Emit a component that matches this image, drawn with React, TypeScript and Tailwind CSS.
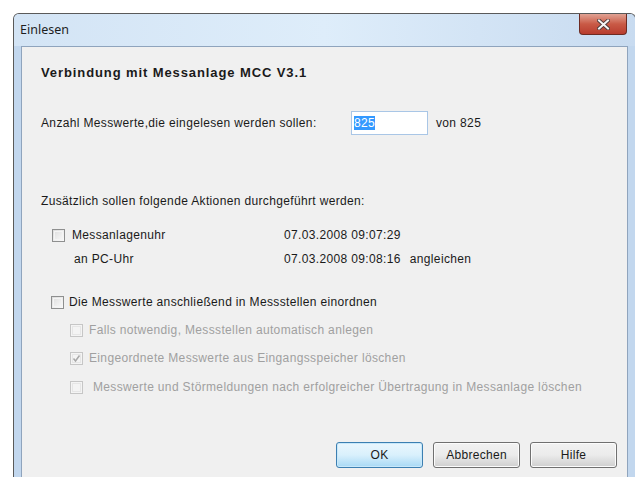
import React from "react";

const ui = { fontFamily: '"Liberation Sans", Arial, sans-serif' };
const titleFont = { fontFamily: '"Noto Sans", "Open Sans", sans-serif' };

function Check({ checked = false, disabled = false }: { checked?: boolean; disabled?: boolean }) {
  return (
    <span
      className={
        "relative inline-block w-[13px] h-[13px] shrink-0 border " +
        (disabled ? "border-[#c6c6c6] bg-[#f4f4f4]" : "border-[#8e8f8f] bg-gradient-to-br from-[#dcdcdc] to-[#fbfbfb]")
      }
    >
      <span
        className={
          "absolute inset-[1px] border " + (disabled ? "border-[#e6e6e6]" : "border-[#f4f4f4]")
        }
      />
      {checked && (
        <svg className="absolute left-[1px] top-[1px]" width="9" height="9" viewBox="0 0 9 9">
          <path d="M1.5 4.5 L3.5 7 L7.5 1.5" fill="none" stroke={disabled ? "#a8a8a8" : "#4a5f97"} strokeWidth="1.5" />
        </svg>
      )}
    </span>
  );
}

function Btn({ label, primary = false }: { label: string; primary?: boolean }) {
  return (
    <div
      className={
        "w-[87px] h-[26px] rounded-[3px] border flex items-center justify-center text-[12px] tracking-[0.3px] text-[#1a1a1a] " +
        (primary
          ? "border-[#3c7fb1] bg-gradient-to-b from-[#eaf6fd] via-[#d9f0fc] to-[#a7d9f5] shadow-[inset_0_0_0_1px_#c8e8fa]"
          : "border-[#707070] bg-gradient-to-b from-[#f2f2f2] via-[#ebebeb] to-[#cfcfcf] shadow-[inset_0_0_0_1px_#fcfcfc]")
      }
    >
      {label}
    </div>
  );
}

export default function App() {
  return (
    <div className="w-[635px] h-[477px] bg-white overflow-hidden" style={ui}>
      <div className="ml-[13px] mt-[13px] w-[623px] h-[470px] border border-[#5a5a5a] border-b-0 rounded-t-[6px] bg-[#c2d7ee] flex flex-col overflow-hidden">
        {/* title bar */}
        <div className="h-[32px] shrink-0 flex items-start justify-between bg-gradient-to-r from-[#d3e4f5] via-[#deedfa] to-[#c8dbf0]">
          <div className="pl-[6px] pt-[7px] text-[12.5px] text-[#1e1e1e]" style={titleFont}>
            Einlesen
          </div>
          <div className="mr-[8px] w-[48px] h-[21px] rounded-b-[4px] border border-t-0 border-[#6d2b22] bg-gradient-to-b from-[#e0a294] via-[#c95a46] to-[#b83c2e] flex items-center justify-center">
            <svg width="13" height="11" viewBox="0 0 13 11">
              <path d="M2 1.5 L11 9.5 M11 1.5 L2 9.5" stroke="#4a3a3a" strokeWidth="3.8" strokeLinecap="square" />
              <path d="M2 1.5 L11 9.5 M11 1.5 L2 9.5" stroke="#f4f4f4" strokeWidth="2" strokeLinecap="square" />
            </svg>
          </div>
        </div>
        {/* client area */}
        <div className="flex-1 mx-[7px] border border-b-0 border-[#8fa4bd] bg-[#f0f0f0] text-[12px] tracking-[0.35px] text-[#1a1a1a] flex flex-col">
          <div className="pl-[19px] mt-[18px] h-[16px] leading-[16px] font-bold text-[13px] tracking-[0.9px]">
            Verbindung mit Messanlage MCC V3.1
          </div>
          <div className="pl-[19px] mt-[30px] h-[24px] flex items-center">
            <span className="w-[310px]">Anzahl Messwerte,die eingelesen werden sollen:</span>
            <div className="w-[77px] h-[24px] border border-[#a9c6e6] bg-white flex items-center pl-[2px]">
              <span className="bg-[#3399ff] text-white leading-[14px]">825</span>
            </div>
            <span className="ml-[8px]">von 825</span>
          </div>
          <div className="pl-[19px] mt-[58px] h-[16px] leading-[16px]">
            Zusätzlich sollen folgende Aktionen durchgeführt werden:
          </div>
          <div className="mt-[18px] h-[16px] flex items-center">
            <div className="pl-[30px] w-[262px] flex items-center gap-[7px]">
              <Check />
              <span>Messanlagenuhr</span>
            </div>
            <span>07.03.2008 09:07:29</span>
          </div>
          <div className="mt-[8px] h-[16px] flex items-center">
            <div className="pl-[52px] w-[262px]">an PC-Uhr</div>
            <span>07.03.2008 09:08:16</span>
            <span className="ml-[9px]">angleichen</span>
          </div>
          <div className="mt-[27px] h-[16px] flex items-center pl-[29px] gap-[5px]">
            <Check />
            <span>Die Messwerte anschließend in Messstellen einordnen</span>
          </div>
          <div className="pl-[48px] flex flex-col text-[#a0a0a0]">
            <div className="mt-[12px] h-[16px] flex items-center gap-[6px]">
              <Check disabled />
              <span>Falls notwendig, Messstellen automatisch anlegen</span>
            </div>
            <div className="mt-[12px] h-[16px] flex items-center gap-[6px]">
              <Check disabled checked />
              <span>Eingeordnete Messwerte aus Eingangsspeicher löschen</span>
            </div>
            <div className="mt-[13px] h-[16px] flex items-center gap-[10px]">
              <Check disabled />
              <span>Messwerte und Störmeldungen nach erfolgreicher Übertragung in Messanlage löschen</span>
            </div>
          </div>
          <div className="mt-[47px] pr-[10px] flex justify-end gap-[10px]">
            <Btn label="OK" primary />
            <Btn label="Abbrechen" />
            <Btn label="Hilfe" />
          </div>
        </div>
      </div>
    </div>
  );
}
